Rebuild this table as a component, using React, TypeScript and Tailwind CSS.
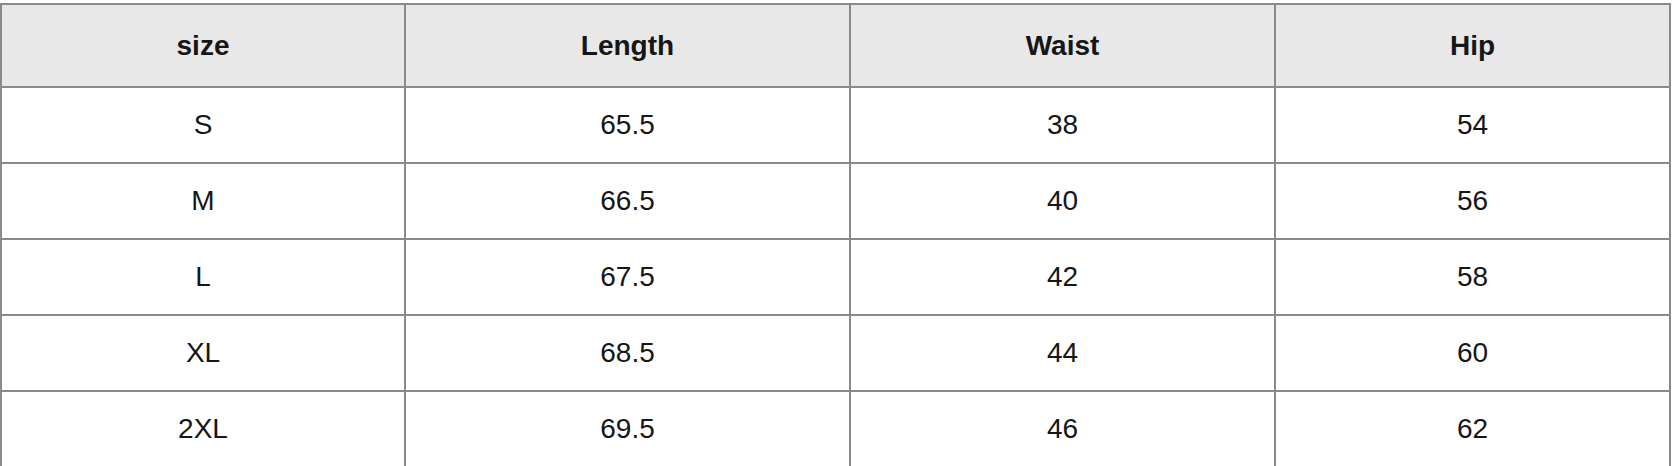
import React from "react";

const headers = ["size", "Length", "Waist", "Hip"];
const rows = [
  ["S", "65.5", "38", "54"],
  ["M", "66.5", "40", "56"],
  ["L", "67.5", "42", "58"],
  ["XL", "68.5", "44", "60"],
  ["2XL", "69.5", "46", "62"],
];

export default function App() {
  return (
    <div className="w-[1674px] h-[466px] overflow-hidden bg-white pt-[3px]">
      <div
        className="grid w-[1671px] grid-cols-[402px_443px_423px_393px] grid-rows-[81px_74px_74px_74px_74px_74px] gap-[2px] bg-[#8a8a8a] p-[2px] text-[28px] leading-none text-[#161616]"
        style={{ fontFamily: '"Liberation Sans", Arial, sans-serif' }}
      >
        {headers.map((h) => (
          <div key={h} className="flex items-center justify-center bg-[#e8e8e8] font-bold">
            {h}
          </div>
        ))}
        {rows.map((r, i) =>
          r.map((c, j) => (
            <div key={`${i}-${j}`} className="flex items-center justify-center bg-white">
              {c}
            </div>
          ))
        )}
      </div>
    </div>
  );
}
